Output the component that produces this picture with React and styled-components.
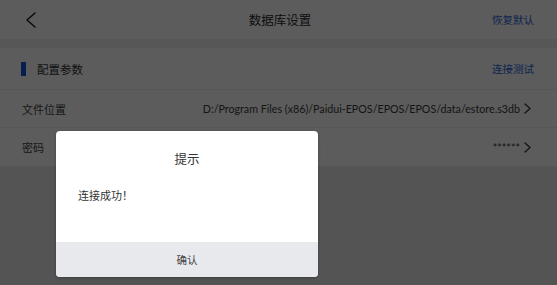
import React from 'react'
import styled, { createGlobalStyle } from 'styled-components'

const GlobalStyle = createGlobalStyle`
  html, body {
    margin: 0;
    padding: 0;
  }
  body {
    font-family: "Noto Sans", "Noto Sans CJK SC", sans-serif;
    background: #e8e8e8;
  }
`

const Page = styled.div`
  position: relative;
  width: 557px;
  height: 285px;
  overflow: hidden;
  background: #e8e8e8;
`

const Header = styled.div`
  display: grid;
  grid-template-columns: 1fr auto 1fr;
  align-items: center;
  height: 39px;
  padding: 0 23px 0 26px;
  background: #fff;
`

const Back = styled.div`
  display: flex;
  align-items: center;
  color: #222;
`

const Title = styled.div`
  font-size: 12.5px;
  color: #2a2a2a;
`

const Link = styled.div`
  justify-self: end;
  font-size: 10.5px;
  color: #2766d8;
`

const Band = styled.div`
  height: 9px;
  background: #f1f1f1;
`

const Section = styled.div`
  background: #fff;
`

const SectionHead = styled.div`
  display: flex;
  align-items: center;
  justify-content: space-between;
  height: 41px;
  padding: 0 23px 0 21px;
  border-bottom: 1px solid #eee;
`

const HeadLabel = styled.div`
  display: flex;
  align-items: center;
  gap: 11px;
  font-size: 11.5px;
  color: #333;
  &::before {
    content: '';
    width: 5px;
    height: 14px;
    background: #1452d6;
  }
`

const Row = styled.div`
  display: flex;
  align-items: center;
  justify-content: space-between;
  height: ${p => p.$h}px;
  padding: 0 26px 0 22px;
  border-bottom: ${p => (p.$last ? 'none' : '1px solid #eee')};
`

const Label = styled.div`
  font-size: 11px;
  color: #444;
`

const Value = styled.div`
  display: flex;
  align-items: center;
  gap: 4px;
  font-size: 10.7px;
  color: #3a3a3a;
  font-family: Lato, "Noto Sans CJK SC", sans-serif;
`

const Overlay = styled.div`
  position: absolute;
  inset: 0;
  background: rgba(0, 0, 0, 0.64);
`

const Dialog = styled.div`
  position: absolute;
  left: 56px;
  top: 131px;
  width: 262px;
  height: 146px;
  display: flex;
  flex-direction: column;
  background: #fff;
  border-radius: 4px;
  overflow: hidden;
  box-shadow: 0 1px 3px rgba(0, 0, 0, 0.3);
`

const DialogTitle = styled.div`
  padding-top: 18px;
  text-align: center;
  font-size: 12.5px;
  color: #333;
`

const DialogBody = styled.div`
  flex: 1;
  padding: 19px 22px 0;
  font-size: 11px;
  color: #333;
`

const DialogButton = styled.div`
  display: flex;
  align-items: center;
  justify-content: center;
  height: 35px;
  background: #e8e9ed;
  font-size: 10.5px;
  color: #444;
`

const Chevron = ({ w, h, dir = 'right', sw = 1.4 }) => (
  <svg width={w} height={h} viewBox={`0 0 ${w} ${h}`} fill="none">
    <path
      d={dir === 'left' ? `M${w - 1} 1 L1 ${h / 2} L${w - 1} ${h - 1}` : `M1 1 L${w - 1} ${h / 2} L1 ${h - 1}`}
      stroke="currentColor"
      strokeWidth={sw}
      strokeLinecap="round"
      strokeLinejoin="round"
    />
  </svg>
)

export default function App() {
  return (
    <Page>
      <GlobalStyle />
      <Header>
        <Back>
          <Chevron w={10} h={16} dir="left" sw={1.6} />
        </Back>
        <Title>数据库设置</Title>
        <Link>恢复默认</Link>
      </Header>
      <Band />
      <Section>
        <SectionHead>
          <HeadLabel>配置参数</HeadLabel>
          <Link>连接测试</Link>
        </SectionHead>
        <Row $h={37}>
          <Label>文件位置</Label>
          <Value>
            D:/Program Files (x86)/Paidui-EPOS/EPOS/EPOS/data/estore.s3db
            <Chevron w={7} h={11} />
          </Value>
        </Row>
        <Row $h={38} $last>
          <Label>密码</Label>
          <Value>
            ******
            <Chevron w={7} h={11} />
          </Value>
        </Row>
      </Section>
      <Overlay>
        <Dialog>
          <DialogTitle>提示</DialogTitle>
          <DialogBody>连接成功！</DialogBody>
          <DialogButton>确认</DialogButton>
        </Dialog>
      </Overlay>
    </Page>
  )
}
